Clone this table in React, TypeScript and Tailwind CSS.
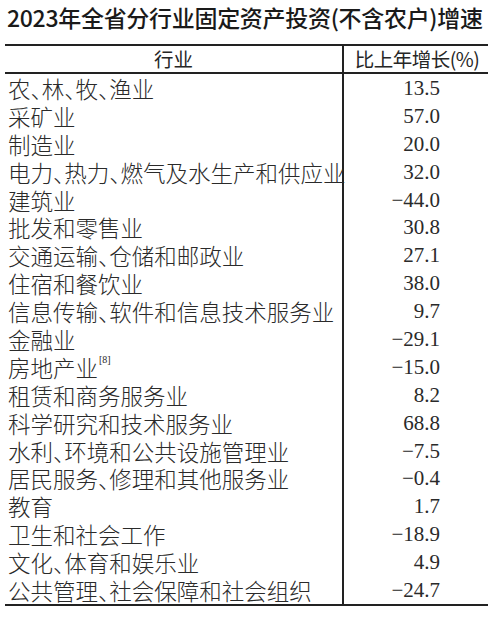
const rows: { name: string; note?: string; value: string }[] = [
  { name: "农、林、牧、渔业", value: "13.5" },
  { name: "采矿业", value: "57.0" },
  { name: "制造业", value: "20.0" },
  { name: "电力、热力、燃气及水生产和供应业", value: "32.0" },
  { name: "建筑业", value: "−44.0" },
  { name: "批发和零售业", value: "30.8" },
  { name: "交通运输、仓储和邮政业", value: "27.1" },
  { name: "住宿和餐饮业", value: "38.0" },
  { name: "信息传输、软件和信息技术服务业", value: "9.7" },
  { name: "金融业", value: "−29.1" },
  { name: "房地产业", note: "[8]", value: "−15.0" },
  { name: "租赁和商务服务业", value: "8.2" },
  { name: "科学研究和技术服务业", value: "68.8" },
  { name: "水利、环境和公共设施管理业", value: "−7.5" },
  { name: "居民服务、修理和其他服务业", value: "−0.4" },
  { name: "教育", value: "1.7" },
  { name: "卫生和社会工作", value: "−18.9" },
  { name: "文化、体育和娱乐业", value: "4.9" },
  { name: "公共管理、社会保障和社会组织", value: "−24.7" },
];

const cjk = "font-['Noto_Sans_CJK_SC',sans-serif] [font-feature-settings:'halt']";

export default function App() {
  return (
    <div className="w-[500px] h-[617px] bg-white text-[#262626] overflow-hidden">
      <h1 className={`${cjk} pl-[7px] pt-[2px] h-[44px] text-[23px] font-medium leading-[30px] tracking-[-0.3px] text-[#1a1a1a]`}>
        2023年全省分行业固定资产投资(不含农户)增速
      </h1>
      <div className="ml-[5px] w-[483px] grid grid-cols-[339px_144px] border-t-2 border-b-2 border-[#222]">
        <div className={`${cjk} h-[28px] flex items-center justify-center border-r-2 border-b-2 border-[#222] text-[19.5px] font-normal`}>
          行业
        </div>
        <div className={`${cjk} h-[28px] flex items-center justify-center border-b-2 border-[#222] text-[19.5px] font-normal pl-[2px] tracking-[-0.5px]`}>
          比上年增长(%)
        </div>
        {rows.map((r) => (
          <div key={r.name} className="contents">
            <div className={`${cjk} h-[27.9px] flex items-center border-r-2 border-[#222] pl-[3px] text-[22.5px] font-light text-[#2a2a2a] whitespace-nowrap leading-[26px]`}>
              {r.name}
              {r.note && (
                <span className="self-start mt-[2px] ml-[1px] font-['Liberation_Serif',serif] text-[10px] leading-none">
                  {r.note}
                </span>
              )}
            </div>
            <div className="h-[27.9px] flex items-center justify-end pr-[48px] font-['Liberation_Serif',serif] text-[21px] leading-[24px] text-[#2a2a2a]">
              {r.value}
            </div>
          </div>
        ))}
      </div>
    </div>
  );
}
